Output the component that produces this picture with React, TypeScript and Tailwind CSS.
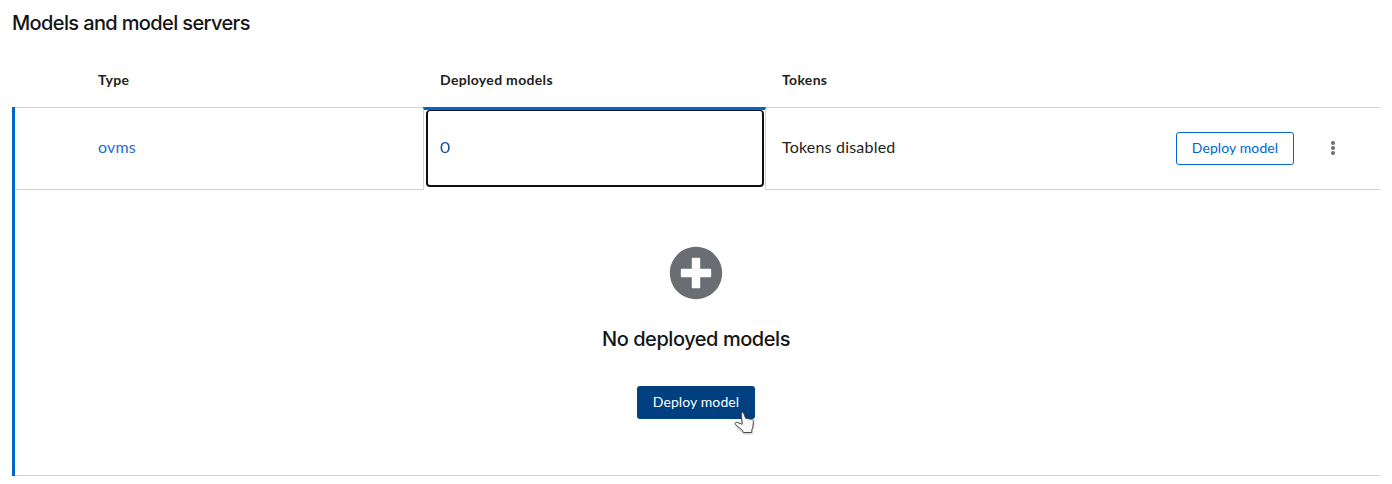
import { FaPlusCircle } from 'react-icons/fa';

function TableHead() {
  return (
    <div className="flex h-[54px] items-center pb-px text-[14px] leading-[21px] font-bold tracking-[0.32px] text-[#222222]">
      <div className="w-[411px] pl-[86px]">Type</div>
      <div className="w-[343px] pl-[17px]">Deployed models</div>
      <div className="pl-4">Tokens</div>
    </div>
  );
}

function ServerRow() {
  return (
    <div className="flex h-[83px] text-[16px] leading-6 tracking-[0.2px]">
      <div className="flex w-[408px] items-center border-y border-[#d2d2d2] pb-1 pl-[83px]">
        <a className="text-[#1f6fd0]">ovms</a>
      </div>
      <div className="flex w-[343px] border-x border-t-[3px] border-x-[#d2d2d2] border-t-[#0066cc]">
        <button className="mr-px mb-[3px] ml-[2px] flex flex-1 items-center rounded-[4px] border-2 border-t border-[#101014] pb-[3px] pl-3 text-left text-[#1a569c]">
          <span className="inline-block origin-left scale-x-110">0</span>
        </button>
      </div>
      <div className="flex flex-1 items-center border-y border-[#d2d2d2] pl-4">
        <span className="flex-1 pb-1 text-[#222222]">Tokens disabled</span>
        <button className="h-[33px] w-[118px] rounded-[3px] border border-[#0066cc] pb-0.5 text-[14px] leading-[21px] tracking-[0.1px] text-[#0066cc]">
          Deploy model
        </button>
        <button aria-label="Actions" className="mr-[39px] mb-0.5 ml-[31px] flex w-4 justify-center text-[#6a6e73]">
          <svg viewBox="0 0 6 16" className="h-4 w-[6px]" fill="currentColor">
            <circle cx="3" cy="3" r="2" />
            <circle cx="3" cy="8" r="2" />
            <circle cx="3" cy="13" r="2" />
          </svg>
        </button>
      </div>
    </div>
  );
}

function PointerCursor() {
  return (
    <svg viewBox="0 0 22 24" className="absolute top-[25px] left-[97px] h-6 w-[22px] drop-shadow-[0_1px_1px_rgba(0,0,0,0.25)]">
      <path
        d="M7.7 1.8C8.2 1.2 9.2 1.3 9.6 2.1L11.6 7.3L17.7 8.4C19 8.7 19.5 9.2 19.4 10.3L18.8 17.1L17.8 18.5V21.5H9.3L8.6 19.6L1.7 13.7C.5 12.5 1.2 11 2.8 11.2L8.2 13.3L7.4 3.2Z"
        fill="#fafafa"
        stroke="#4c4c4c"
        strokeWidth="1"
        strokeLinejoin="round"
      />
    </svg>
  );
}

function EmptyModels() {
  return (
    <div className="flex h-[286px] flex-col items-center border-b border-[#d2d2d2] pr-[3px] pt-14">
      <FaPlusCircle className="h-[54px] w-[54px] text-[#6a6e73]" />
      <h2 className="mt-[26px] font-['Inter',sans-serif] text-[20px] leading-[26px] tracking-[-0.45px] font-medium whitespace-nowrap text-[#151515]">No deployed models</h2>
      <div className="relative mt-[34px]">
        <button className="h-[33px] w-[118px] rounded-[3px] bg-[#004080] pb-0.5 text-[14px] leading-[21px] tracking-[0.1px] text-white">
          Deploy model
        </button>
        <PointerCursor />
      </div>
    </div>
  );
}

export default function App() {
  return (
    <main className="h-[484px] overflow-hidden bg-white px-3 pt-[9px] font-['Lato',sans-serif]">
      <h1 className="h-11 font-['Inter',sans-serif] text-[20px] leading-[28px] tracking-[-0.63px] font-medium text-[#151515]">Models and model servers</h1>
      <TableHead />
      <div className="border-l-[3px] border-[#0066cc]">
        <ServerRow />
        <EmptyModels />
      </div>
    </main>
  );
}
